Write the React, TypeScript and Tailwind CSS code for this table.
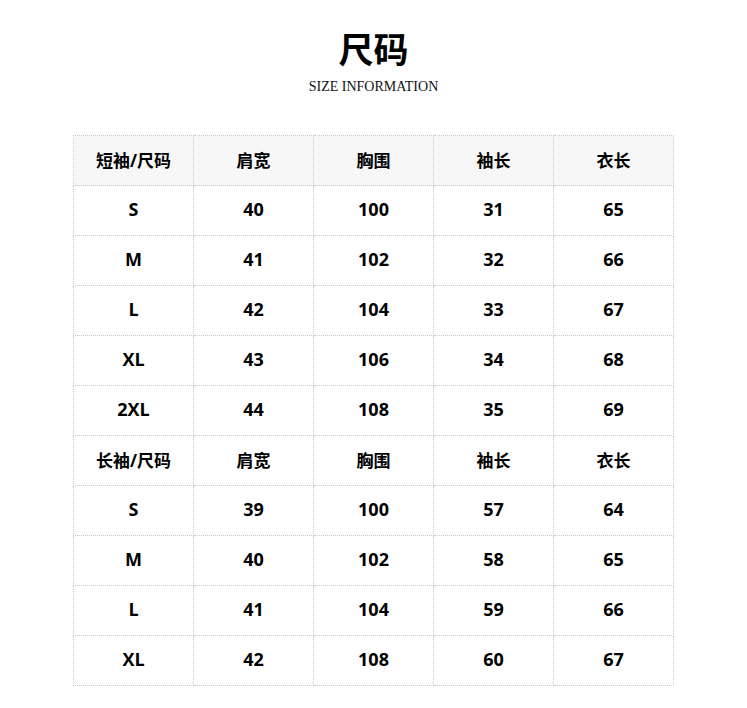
import React from "react";

const short = [
  ["S", "40", "100", "31", "65"],
  ["M", "41", "102", "32", "66"],
  ["L", "42", "104", "33", "67"],
  ["XL", "43", "106", "34", "68"],
  ["2XL", "44", "108", "35", "69"],
];
const long = [
  ["S", "39", "100", "57", "64"],
  ["M", "40", "102", "58", "65"],
  ["L", "41", "104", "59", "66"],
  ["XL", "42", "108", "60", "67"],
];

const cell =
  "border border-dotted border-[#c8c8c8] w-[120px] h-[50px] text-center align-middle";

function Header({ first, gray }: { first: string; gray?: boolean }) {
  return (
    <tr className={gray ? "bg-[#f7f7f7]" : ""}>
      {[first, "肩宽", "胸围", "袖长", "衣长"].map((t, i) => (
        <td key={i} className={cell + " p-0 text-[17px] font-bold"}>
          {t}
        </td>
      ))}
    </tr>
  );
}

function Rows({ data }: { data: string[][] }) {
  return (
    <>
      {data.map((r, i) => (
        <tr key={i}>
          {r.map((t, j) => (
            <td key={j} className={cell + " px-0 pt-0 pb-[2px] text-[18px] font-bold"}>
              {t}
            </td>
          ))}
        </tr>
      ))}
    </>
  );
}

export default function App() {
  return (
    <div
      className="w-[747px] h-[708px] bg-white text-black"
      style={{ fontFamily: '"Open Sans", "Noto Sans CJK SC", sans-serif' }}
    >
      <div className="pt-[26px] flex flex-col items-center">
        <div className="text-[35px] font-bold leading-[48px]">尺码</div>
        <div
          className="text-[14px] leading-[20px] mt-[3px] text-[#111]"
          style={{ fontFamily: '"Liberation Serif", serif' }}
        >
          SIZE INFORMATION
        </div>
      </div>
      <table className="mt-[38px] ml-[73px] border-collapse table-fixed w-[601px]">
        <tbody>
          <Header first="短袖/尺码" gray />
          <Rows data={short} />
          <Header first="长袖/尺码" />
          <Rows data={long} />
        </tbody>
      </table>
    </div>
  );
}
